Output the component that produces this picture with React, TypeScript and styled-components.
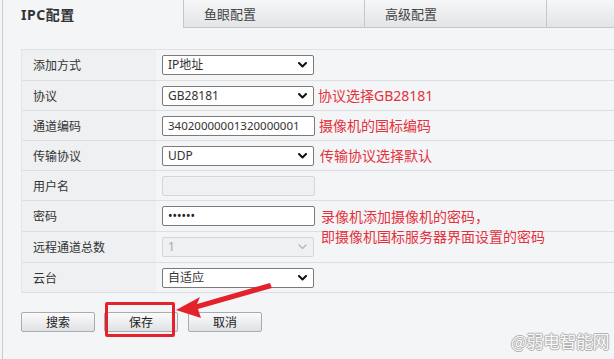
import React from "react";
import styled, { createGlobalStyle, css } from "styled-components";

const Global = createGlobalStyle`
  html, body { margin: 0; padding: 0; background: #f4f5f7; }
  body { font-family: "Noto Sans", "Noto Sans CJK SC", sans-serif; color: #333; overflow: hidden; }
  * { box-sizing: border-box; }
`;

const Page = styled.div`
  position: relative;
  margin-left: 2px;
  border-left: 1px solid #c9ccd0;
  height: 359px;
  width: 612px;
  overflow: hidden;
`;

const TabBar = styled.div`
  display: flex;
  height: 28px;
`;

const Tab = styled.div<{ $active?: boolean; $w?: number }>`
  ${(p) => (p.$w ? `width: ${p.$w}px; flex: none;` : "flex: 1;")}
  height: 28px;
  display: flex;
  align-items: center;
  padding-left: ${(p) => (p.$active ? 18 : 20)}px;
  font-size: ${(p) => (p.$active ? 14 : 13)}px;
  font-weight: ${(p) => (p.$active ? 700 : 400)};
  color: ${(p) => (p.$active ? "#333" : "#444")};
  letter-spacing: ${(p) => (p.$active ? "0.5px" : "0")};
  ${(p) =>
    p.$active
      ? css`
          background: #f4f5f7;
        `
      : css`
          background: linear-gradient(#f6f7f8, #e2e4e7);
          border-left: 1px solid #c4c7cb;
          border-bottom: 1px solid #c4c7cb;
        `}
`;

const Content = styled.div`
  padding: 21px 0 0 18px;
`;

const Table = styled.div`
  border-top: 1px solid #dfe1e4;
  border-left: 1px solid #e3e5e8;
  width: 600px;
`;

const Row = styled.div<{ $h: number }>`
  display: flex;
  height: ${(p) => p.$h}px;
  border-bottom: 1px solid #dcdee1;
`;

const Label = styled.div`
  width: 134px;
  flex: none;
  display: flex;
  align-items: center;
  padding-left: 11px;
  background: #eef0f2;
  font-size: 12px;
  color: #333;
`;

const Value = styled.div`
  flex: 1;
  display: flex;
  align-items: center;
  padding-left: 6px;
  gap: 4px;
`;

const Field = styled.div<{ $disabled?: boolean; $w?: number }>`
  width: ${(p) => p.$w ?? 152}px;
  height: 20px;
  flex: none;
  display: flex;
  align-items: center;
  justify-content: space-between;
  padding: 0 6px 0 5px;
  border-radius: 2px;
  font-size: 12px;
  line-height: 1;
  border: 1px solid ${(p) => (p.$disabled ? "#d4d6d9" : "#7a7a7a")};
  background: ${(p) => (p.$disabled ? "#eef0f2" : "#fff")};
  color: ${(p) => (p.$disabled ? "#a8a8a8" : "#333")};
`;

const Digits = styled.span`
  font-size: 11.5px;
`;

const Dots = styled.span`
  font-size: 12px;
  letter-spacing: 0px;
  color: #222;
`;

const Note = styled.div<{ $multi?: boolean }>`
  color: #e3323d;
  font-size: 14px;
  line-height: 20px;
  white-space: nowrap;
  ${(p) =>
    p.$multi &&
    css`
      align-self: flex-start;
      margin-top: 6px;
      margin-left: 2px;
    `}
`;

const ButtonRow = styled.div`
  display: flex;
  gap: 9px;
  margin-top: 19px;
`;

const Button = styled.div`
  position: relative;
  width: 74px;
  height: 20px;
  display: flex;
  align-items: center;
  justify-content: center;
  font-size: 12px;
  color: #222;
  border: 1px solid #a8abb0;
  border-radius: 2px;
  background: linear-gradient(#fbfbfc, #dfe1e4);
  & + & + & { margin-left: 1px; }
`;

const Highlight = styled.div`
  position: absolute;
  left: 0px;
  top: -11px;
  width: 70px;
  height: 35px;
  border: 3px solid #e4222b;
  border-radius: 2px;
`;

const ArrowSvg = styled.svg`
  position: absolute;
  left: 0;
  top: 0;
  pointer-events: none;
`;

const Watermark = styled.div`
  position: absolute;
  right: 5px;
  bottom: 6px;
  font-size: 17px;
  font-weight: 400;
  color: #f7f7f7;
  letter-spacing: -0.5px;
  text-shadow: -1px 0 #b4b4b4, 1px 0 #b4b4b4, 0 -1px #b4b4b4, 0 1px #b4b4b4;
  font-family: "Noto Sans CJK SC", sans-serif;
`;

const Chevron = ({ light }: { light?: boolean }) => (
  <svg width="9" height="6" viewBox="0 0 9 6">
    <path
      d="M1 1 L4.5 4.5 L8 1"
      fill="none"
      stroke={light ? "#b5b5b5" : "#111"}
      strokeWidth={light ? 1.3 : 2}
      strokeLinecap="round"
      strokeLinejoin="round"
    />
  </svg>
);

const Select = ({ value, disabled }: { value: string; disabled?: boolean }) => (
  <Field $disabled={disabled}>
    <span>{value}</span>
    <Chevron light={disabled} />
  </Field>
);

export default function App() {
  return (
    <>
      <Global />
      <Page>
        <TabBar>
          <Tab $active $w={180}>IPC配置</Tab>
          <Tab $w={181}>鱼眼配置</Tab>
          <Tab $w={182}>高级配置</Tab>
          <Tab />
        </TabBar>
        <Content>
          <Table>
            <Row $h={31}>
              <Label>添加方式</Label>
              <Value>
                <Select value="IP地址" />
              </Value>
            </Row>
            <Row $h={30}>
              <Label>协议</Label>
              <Value>
                <Select value="GB28181" />
                <Note>协议选择GB28181</Note>
              </Value>
            </Row>
            <Row $h={30}>
              <Label>通道编码</Label>
              <Value>
                <Field $w={153}>
                  <Digits>34020000001320000001</Digits>
                </Field>
                <Note>摄像机的国标编码</Note>
              </Value>
            </Row>
            <Row $h={30}>
              <Label>传输协议</Label>
              <Value>
                <Select value="UDP" />
                <Note style={{ marginLeft: 2 }}>传输协议选择默认</Note>
              </Value>
            </Row>
            <Row $h={30}>
              <Label>用户名</Label>
              <Value>
                <Field $disabled $w={153} />
              </Value>
            </Row>
            <Row $h={31}>
              <Label>密码</Label>
              <Value>
                <Field $w={153}>
                  <Dots>••••••</Dots>
                </Field>
                <Note $multi>
                  录像机添加摄像机的密码，
                  <br />
                  即摄像机国标服务器界面设置的密码
                </Note>
              </Value>
            </Row>
            <Row $h={31}>
              <Label>远程通道总数</Label>
              <Value>
                <Select value="1" disabled />
              </Value>
            </Row>
            <Row $h={30}>
              <Label>云台</Label>
              <Value>
                <Select value="自适应" />
              </Value>
            </Row>
          </Table>
          <ButtonRow>
            <Button>搜索</Button>
            <Button>
              保存
              <Highlight />
            </Button>
            <Button>取消</Button>
          </ButtonRow>
        </Content>
        <ArrowSvg width="612" height="359" viewBox="3 0 612 359">
          <polygon
            points="176,310 200,297 197,304 270,283 272,288 198,309 201,318"
            fill="#e4222b"
          />
        </ArrowSvg>
        <Watermark>@弱电智能网</Watermark>
      </Page>
    </>
  );
}
